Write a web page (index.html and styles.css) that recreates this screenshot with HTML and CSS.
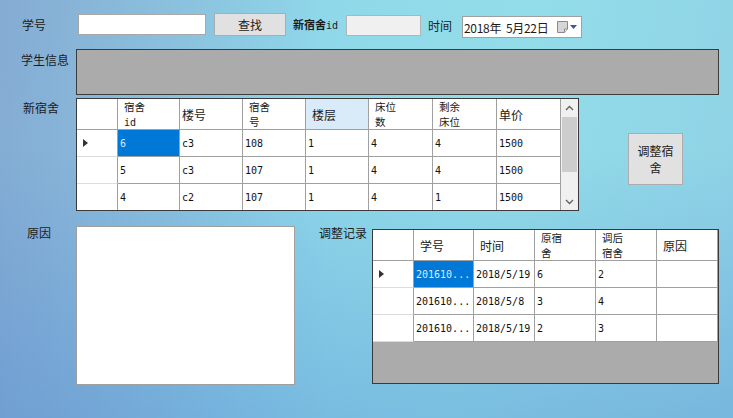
FILE: index.html
```html
<!DOCTYPE html>
<html lang="zh-CN">
<head>
<meta charset="utf-8">
<title>调整宿舍</title>
<link rel="stylesheet" href="styles.css">
</head>
<body>
<div class="form">
  <div class="row r1">
    <span class="lbl l-xh">学号</span>
    <div class="input in1"></div>
    <div class="btn btn-find">查找</div>
    <span class="lbl-id">新宿舍<span class="mono">id</span></span>
    <div class="input in2"></div>
    <span class="lbl-time">时间</span>
    <div class="date">
      <span class="date-text">2018年&nbsp;&nbsp;5月22日</span>
      <svg class="cal" width="11" height="12" viewBox="0 0 11 12">
        <path d="M0.5 0.5 H10.5 V8 L7.5 11.5 H0.5 Z" fill="#d6d6d6" stroke="#8a8a8a"/>
        <path d="M7.5 11.5 V8 H10.5" fill="#efefef" stroke="#8a8a8a"/>
      </svg>
      <svg class="drop" width="7" height="4" viewBox="0 0 7 4">
        <path d="M0 0 H7 L3.5 4 Z" fill="#3d5a8c"/>
      </svg>
    </div>
  </div>

  <div class="row r2">
    <span class="lbl l-info">学生信息</span>
    <div class="infobox"></div>
  </div>

  <div class="row r3">
    <span class="lbl l-new">新宿舍</span>
    <div class="dgv dgv1">
      <div class="dgv-body">
        <div class="dr dh g1">
          <div class="c rh"></div>
          <div class="c"><span class="h2">宿舍<br><span class="mono sm">id</span></span></div>
          <div class="c tight">楼号</div>
          <div class="c"><span class="h2">宿舍<br>号</span></div>
          <div class="c hl">楼层</div>
          <div class="c"><span class="h2">床位<br>数</span></div>
          <div class="c"><span class="h2">剩余<br>床位</span></div>
          <div class="c tight">单价</div>
        </div>
        <div class="dr g1">
          <div class="c rh"><span class="arrow"></span></div>
          <div class="c d sel">6</div>
          <div class="c d">c3</div>
          <div class="c d">108</div>
          <div class="c d">1</div>
          <div class="c d">4</div>
          <div class="c d">4</div>
          <div class="c d">1500</div>
        </div>
        <div class="dr g1">
          <div class="c rh"></div>
          <div class="c d">5</div>
          <div class="c d">c3</div>
          <div class="c d">107</div>
          <div class="c d">1</div>
          <div class="c d">4</div>
          <div class="c d">4</div>
          <div class="c d">1500</div>
        </div>
        <div class="dr g1">
          <div class="c rh"></div>
          <div class="c d">4</div>
          <div class="c d">c2</div>
          <div class="c d">107</div>
          <div class="c d">1</div>
          <div class="c d">4</div>
          <div class="c d">1</div>
          <div class="c d">1500</div>
        </div>
      </div>
      <div class="vscroll">
        <div class="sb-btn">
          <svg width="9" height="6" viewBox="0 0 9 6"><path d="M1 5 L4.5 1.5 L8 5" fill="none" stroke="#606060" stroke-width="1.3"/></svg>
        </div>
        <div class="sb-track"><div class="sb-thumb"></div></div>
        <div class="sb-btn">
          <svg width="9" height="6" viewBox="0 0 9 6"><path d="M1 1 L4.5 4.5 L8 1" fill="none" stroke="#606060" stroke-width="1.3"/></svg>
        </div>
      </div>
    </div>
    <div class="btn btn-adjust">调整宿<br>舍</div>
  </div>

  <div class="row r4">
    <span class="lbl l-reason">原因</span>
    <div class="textarea"></div>
    <span class="lbl-log">调整记录</span>
    <div class="dgv dgv2">
      <div class="dgv-body">
        <div class="dr dh g2">
          <div class="c rh"></div>
          <div class="c">学号</div>
          <div class="c">时间</div>
          <div class="c"><span class="h2">原宿<br>舍</span></div>
          <div class="c"><span class="h2">调后<br>宿舍</span></div>
          <div class="c">原因</div>
        </div>
        <div class="dr g2">
          <div class="c rh"><span class="arrow"></span></div>
          <div class="c d sel">201610...</div>
          <div class="c d">2018/5/19</div>
          <div class="c d">6</div>
          <div class="c d">2</div>
          <div class="c d"></div>
        </div>
        <div class="dr g2">
          <div class="c rh"></div>
          <div class="c d">201610...</div>
          <div class="c d">2018/5/8</div>
          <div class="c d">3</div>
          <div class="c d">4</div>
          <div class="c d"></div>
        </div>
        <div class="dr g2">
          <div class="c rh"></div>
          <div class="c d">201610...</div>
          <div class="c d">2018/5/19</div>
          <div class="c d">2</div>
          <div class="c d">3</div>
          <div class="c d"></div>
        </div>
      </div>
    </div>
  </div>
</div>
</body>
</html>
```

FILE: styles.css
```css
* { box-sizing: border-box; }

html, body {
  margin: 0;
  padding: 0;
}

body {
  width: 733px;
  height: 418px;
  overflow: hidden;
  font-family: "Noto Sans CJK SC", "Noto Sans", sans-serif;
  font-size: 12px;
  color: #1c1c1c;
  background:
    linear-gradient(to bottom, rgba(80, 130, 210, 0) 35%, rgba(70, 125, 205, 0.32) 100%),
    linear-gradient(to right, rgba(120, 150, 205, 0.5) 0%, rgba(120, 150, 205, 0) 45%),
    linear-gradient(100deg, #92c2da 0%, #8fd8ea 40%, #93dde9 65%, #8fd2e6 100%);
}

.form {
  padding-top: 12px;
}

.row {
  display: flex;
  align-items: flex-start;
}

.mono {
  font-family: "DejaVu Sans Mono", "Liberation Mono", monospace;
}

/* labels */
.lbl {
  width: 76px;
  flex: none;
  line-height: 17px;
  white-space: nowrap;
}
.l-xh { padding-left: 22px; margin-top: 4px; }
.l-info { padding-left: 21px; margin-top: 2px; }
.l-new { padding-left: 23px; margin-top: 1px; }
.l-reason { padding-left: 27px; margin-top: 0; }

.lbl-id {
  margin-left: 7px;
  width: 53px;
  flex: none;
  margin-top: 4px;
  line-height: 17px;
  font-size: 11px;
  font-weight: 700;
  white-space: nowrap;
}
.lbl-id .mono { font-size: 10px; font-weight: 400; }

.lbl-time {
  margin-left: 7px;
  width: 34px;
  flex: none;
  margin-top: 5px;
  line-height: 17px;
}

.lbl-log {
  margin-left: 24px;
  width: 53px;
  flex: none;
  line-height: 17px;
  white-space: nowrap;
}

/* row 1 */
.r1 { height: 25px; }

.input {
  flex: none;
  border: 1px solid #a8a8a8;
  background: #fff;
}
.in1 { width: 128px; height: 21px; margin-left: 2px; margin-top: 2px; }
.in2 { width: 75px; height: 21px; margin-top: 3px; background: #f0f0f0; border-color: #b4b4b4; }

.btn {
  flex: none;
  background: #e1e1e1;
  border: 1px solid #adadad;
  display: flex;
  align-items: center;
  justify-content: center;
  text-align: center;
  color: #1c1c1c;
}
.btn-find { width: 72px; height: 23px; margin-left: 8px; margin-top: 1px; }

.date {
  flex: none;
  width: 120px;
  height: 22px;
  margin-top: 4px;
  background: #fff;
  border: 1px solid #a0a0a0;
  display: flex;
  align-items: center;
  padding-left: 1px;
}
.date-text {
  font-size: 12px;
  letter-spacing: -0.3px;
  white-space: nowrap;
}
.cal { margin-left: 9px; flex: none; }
.drop { margin-left: 2px; flex: none; }

/* row 2 */
.r2 { margin-top: 12px; }
.infobox {
  width: 643px;
  height: 46px;
  background: #ababab;
  border: 1px solid #3c3c3c;
  flex: none;
}

/* row 3 */
.r3 { margin-top: 3px; }

.dgv {
  flex: none;
  border: 1px solid #3a3a3a;
  overflow: hidden;
  display: flex;
}
.dgv1 { width: 503px; height: 113px; background: #fff; }
.dgv2 { width: 347px; height: 155px; background: #ababab; margin-top: 5px; }

.dgv-body { flex: none; }

.dr {
  display: grid;
  height: 27px;
}
.dr.dh { height: 31px; }

.g1 { grid-template-columns: 41px 62px 63px 63px 63px 64px 64px 64px; }
.g2 { grid-template-columns: 41px 60px 61px 61px 61px 61px; }

.c {
  background: #fff;
  border-right: 1px solid #a0a0a0;
  border-bottom: 1px solid #a0a0a0;
  display: flex;
  align-items: center;
  padding-left: 6px;
  white-space: nowrap;
  overflow: hidden;
  font-size: 12px;
  color: #1a1a1a;
}
.c.tight { padding-left: 2px; }
.c.hl { background: #d9ebf9; }

.h2 {
  font-size: 10.5px;
  line-height: 15px;
  display: block;
}
.h2 .sm { font-size: 10px; }

.c.rh { padding-left: 6px; border-bottom-color: #dcdcdc; }
.dh .c.rh { border-bottom-color: #a0a0a0; }

.c.d {
  font-family: "DejaVu Sans Mono", "Liberation Mono", monospace;
  font-size: 10px;
  padding-left: 2px;
  color: #111;
}
.c.sel {
  background: #0078d7;
  color: #dcecff;
}

.arrow {
  width: 0;
  height: 0;
  border-top: 4.5px solid transparent;
  border-bottom: 4.5px solid transparent;
  border-left: 5px solid #333;
}

/* scrollbar */
.vscroll {
  width: 17px;
  flex: none;
  background: #f0f0f0;
  display: flex;
  flex-direction: column;
}
.sb-btn {
  height: 17px;
  display: flex;
  align-items: center;
  justify-content: center;
  flex: none;
}
.sb-track {
  flex: 1;
  padding: 1px 1px;
}
.sb-thumb {
  height: 55px;
  background: #cdcdcd;
}

.btn-adjust {
  width: 55px;
  height: 52px;
  margin-left: 49px;
  margin-top: 35px;
  line-height: 17px;
}

/* row 4 */
.r4 { margin-top: 13px; }
.textarea {
  flex: none;
  width: 219px;
  height: 159px;
  margin-top: 2px;
  background: #fff;
  border: 1px solid #a0a0a0;
}
```
